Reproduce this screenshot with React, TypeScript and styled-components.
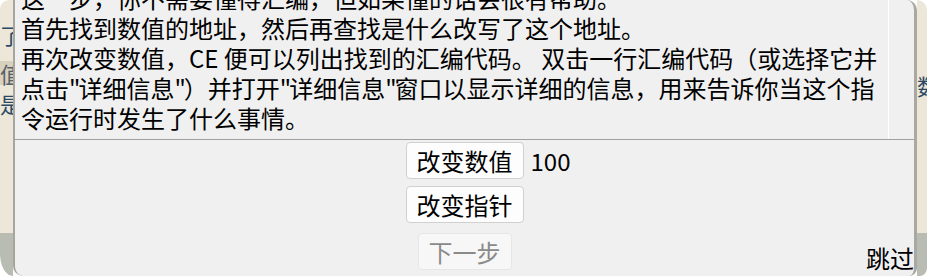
import styled, { createGlobalStyle } from 'styled-components';

const GlobalStyle = createGlobalStyle`
  html, body {
    margin: 0;
    padding: 0;
    background: #ffffff;
    overflow: hidden;
  }
`;

const Screen = styled.div`
  width: 927px;
  height: 276px;
  display: flex;
  font-family: 'Noto Sans CJK SC', 'Noto Sans', sans-serif;
`;

const Backdrop = styled.div<{ $side: 'left' | 'right' }>`
  width: ${({ $side }) => ($side === 'left' ? '13px' : '10px')};
  display: flex;
  flex-direction: column;
  overflow: hidden;
  background: linear-gradient(to bottom, #ece7d8 0, #ece7d8 233px, #b9bcb3 233px);
  border-radius: ${({ $side }) => ($side === 'left' ? '10px 0 0 14px / 10px 0 0 24px' : '0 16px 12px 0')};
  color: #2b4965;
  font-size: 22px;
  line-height: 24px;
`;

const BackChar = styled.div<{ $shift: number; $top: number; $active?: boolean }>`
  margin-top: ${({ $top }) => $top}px;
  padding-left: ${({ $shift }) => $shift}px;
  white-space: nowrap;
  background: ${({ $active }) => ($active ? '#d8d1bd' : 'transparent')};
  color: ${({ $active }) => ($active ? '#56606a' : '#2b4965')};
`;

const Window = styled.div`
  width: 899px;
  display: flex;
  flex-direction: column;
  background: #f0f0f0;
  border-left: 2px solid #a6a69e;
  border-right: 3px solid #a9a9a1;
  border-radius: 0 10px 8px 10px;
  overflow: hidden;
  color: #000;
  font-size: 24px;
`;

const Memo = styled.div`
  height: 139px;
  flex-shrink: 0;
  display: flex;
  border-bottom: 1px solid #a0a0a0;
  overflow: hidden;
`;

const MemoText = styled.div`
  width: 867px;
  padding-left: 6px;
  margin-top: -17px;
  line-height: 30px;
`;

const Line = styled.div`
  white-space: nowrap;
`;

const Quote = styled.span`
  letter-spacing: -2px;
`;

const Gutter = styled.div`
  flex: 1;
  border-left: 1px solid #ffffff;
`;

const Controls = styled.div`
  display: flex;
  flex-direction: column;
`;

const Row = styled.div<{ $gap: number }>`
  margin-top: ${({ $gap }) => $gap}px;
  display: grid;
  grid-template-columns: 1fr auto 1fr;
  align-items: center;
`;

const Button = styled.button`
  grid-column: 2;
  height: 37px;
  padding: 0 10px;
  border: 1px solid #d0d0d0;
  border-radius: 4px;
  background: #fdfdfd;
  color: #000;
  font-family: inherit;
  font-size: 24px;
  line-height: 33px;

  &:disabled {
    background: #f7f7f7;
    border-color: #e6e6e6;
    color: #8a8a8a;
  }
`;

const ValueLabel = styled.span`
  justify-self: start;
  margin-left: 7px;
  line-height: 30px;
`;

const SkipLabel = styled.span`
  grid-column: 3;
  justify-self: end;
  align-self: end;
  line-height: 24px;
`;

export default function App() {
  return (
    <>
      <GlobalStyle />
      <Screen>
        <Backdrop $side="left">
          <BackChar $top={22} $shift={-7}>了</BackChar>
          <BackChar $top={15} $shift={-9} $active>值</BackChar>
          <BackChar $top={6} $shift={-6}>是</BackChar>
        </Backdrop>
        <Window>
          <Memo>
            <MemoText>
              <Line>这一步，你不需要懂得汇编，但如果懂的话会很有帮助。</Line>
              <Line>首先找到数值的地址，然后再查找是什么改写了这个地址。</Line>
              <Line>再次改变数值，CE 便可以列出找到的汇编代码。 双击一行汇编代码（或选择它并</Line>
              <Line>
                点击<Quote>"</Quote>详细信息<Quote>"</Quote>）并打开<Quote>"</Quote>详细信息<Quote>"</Quote>
                窗口以显示详细的信息，用来告诉你当这个指
              </Line>
              <Line>令运行时发生了什么事情。</Line>
            </MemoText>
            <Gutter />
          </Memo>
          <Controls>
            <Row $gap={2}>
              <Button type="button">改变数值</Button>
              <ValueLabel>100</ValueLabel>
            </Row>
            <Row $gap={7}>
              <Button type="button">改变指针</Button>
            </Row>
            <Row $gap={10}>
              <Button type="button" disabled>
                下一步
              </Button>
              <SkipLabel>跳过</SkipLabel>
            </Row>
          </Controls>
        </Window>
        <Backdrop $side="right">
          <BackChar $top={73} $shift={0}>数</BackChar>
        </Backdrop>
      </Screen>
    </>
  );
}
